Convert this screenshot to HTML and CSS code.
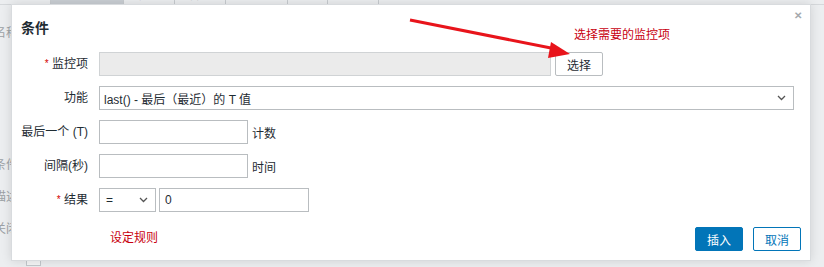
FILE: index.html
```html
<!DOCTYPE html>
<html lang="zh-CN">
<head>
    <meta charset="UTF-8">
    <title>条件</title>
    <link rel="stylesheet" href="styles.css">
</head>
<body>
    <div class="page">
        <ul class="tabs">
            <li class="tab">配置</li>
            <li class="tab active">依赖关系</li>
            <li class="tab">信息</li>
            <li class="tab">告警</li>
            <li class="tab">触发器</li>
            <li class="tab">宏</li>
            <li class="tab">标记</li>
        </ul>
        <div class="page-labels">
            <div class="page-label top">名称</div>
            <div class="page-label mid">条件</div>
            <div class="page-label">描述</div>
            <div class="page-label">关闭</div>
        </div>
        <div class="page-check"></div>
    </div>

    <div class="dialog">
        <div class="dialog-head">
            <h2>条件</h2>
            <span class="close">&#x2715;</span>
        </div>
        <div class="form">
            <label class="lbl"><span class="req">*</span> 监控项</label>
            <div class="field">
                <input class="input readonly wide-1" type="text" readonly>
                <button class="btn-plain">选择</button>
            </div>

            <label class="lbl">功能</label>
            <div class="field">
                <div class="select wide-2">
                    <span>last() - 最后（最近）的 T 值</span>
                    <svg class="chev" width="9" height="6" viewBox="0 0 9 6"><path d="M1 1l3.5 3.5L8 1" fill="none" stroke="#555" stroke-width="1.3"/></svg>
                </div>
            </div>

            <label class="lbl">最后一个 (T)</label>
            <div class="field">
                <input class="input short" type="text">
                <span class="unit">计数</span>
            </div>

            <label class="lbl">间隔(秒)</label>
            <div class="field">
                <input class="input short" type="text">
                <span class="unit">时间</span>
            </div>

            <label class="lbl"><span class="req">*</span> 结果</label>
            <div class="field tight">
                <div class="select op">
                    <span>=</span>
                    <svg class="chev" width="9" height="6" viewBox="0 0 9 6"><path d="M1 1l3.5 3.5L8 1" fill="none" stroke="#555" stroke-width="1.3"/></svg>
                </div>
                <input class="input value" type="text" value="0">
            </div>
        </div>
        <div class="dialog-foot">
            <span class="note rule-note">设定规则</span>
            <div class="actions">
                <button class="btn-primary">插入</button>
                <button class="btn-alt">取消</button>
            </div>
        </div>
    </div>

    <!-- annotation layer -->
    <span class="note pick-note">选择需要的监控项</span>
    <svg class="arrow" width="824" height="267" viewBox="0 0 824 267">
        <line x1="410" y1="20" x2="556" y2="49" stroke="#e8141b" stroke-width="3"/>
        <polygon points="570,54 551,42 548,58" fill="#e8141b"/>
    </svg>
</body>
</html>
```

FILE: styles.css
```css
body {
    margin: 0;
    width: 824px;
    height: 267px;
    overflow: hidden;
    background-color: #eceef0;
    font-family: Arial, "Liberation Sans", "Noto Sans CJK SC", sans-serif;
    font-size: 12px;
    color: #1f2c33;
    position: relative;
}

/* page behind the dialog */
.page {
    height: 267px;
}
.tabs {
    list-style: none;
    margin: -13px 0 0 0;
    padding: 0;
    display: flex;
    height: 17px;
    border-bottom: 1px solid #d5d8db;
    font-size: 11px;
    line-height: 13px;
}
.tab {
    padding: 2px 14px;
    border-right: 1px solid #c7cbcf;
    color: #9aa0a4;
    white-space: nowrap;
}
.tab.active {
    background-color: #c9ced3;
}
.page-labels {
    width: 18px;
    padding-top: 18px;
}
.page-label {
    text-align: right;
    color: #9ca1a5;
    white-space: nowrap;
    direction: rtl;
    margin-bottom: 18px;
    height: 14px;
}
.page-label.top {
    margin-bottom: 118px;
}
.page-check {
    margin: 2px 0 0 26px;
    width: 13px;
    height: 13px;
    border: 1px solid #c3c8cc;
    background-color: #f4f5f6;
}

/* dialog */
.dialog {
    position: absolute;
    left: 11px;
    top: 4px;
    width: 800px;
    height: 257px;
    box-sizing: border-box;
    background-color: #fff;
    border: 1px solid #d8dbde;
    box-shadow: 0 0 10px rgba(0, 0, 0, 0.12);
    padding: 0 9px 0 9px;
}
.dialog-head {
    display: flex;
    justify-content: space-between;
    height: 39px;
}
.dialog-head h2 {
    margin: 12px 0 0 0;
    font-size: 14px;
    font-weight: bold;
    color: #1f2c33;
}
.close {
    margin: 5px -1px 0 0;
    font-size: 10px;
    font-weight: bold;
    color: #a5a9ad;
}

.form {
    margin-top: 8px;
    display: grid;
    grid-template-columns: 67px 1fr;
    column-gap: 11px;
    row-gap: 10px;
}
.lbl {
    text-align: right;
    line-height: 24px;
    white-space: nowrap;
}
.req {
    color: #d40000;
    font-size: 10px;
    vertical-align: 1px;
}
.field {
    display: flex;
    align-items: center;
    gap: 4px;
    height: 24px;
}
.field.tight {
    gap: 3px;
}
.input {
    box-sizing: border-box;
    height: 24px;
    border: 1px solid #b9bdc0;
    padding: 0 4px;
    font-family: inherit;
    font-size: 12px;
    color: #1f2c33;
    background-color: #fff;
    margin: 0;
}
.input.readonly {
    background-color: #ebebeb;
    border-color: #d0d3d5;
}
.wide-1 {
    width: 452px;
}
.short {
    width: 149px;
}
.value {
    width: 150px;
    padding-left: 5px;
}
.select {
    box-sizing: border-box;
    height: 24px;
    border: 1px solid #b9bdc0;
    display: flex;
    align-items: center;
    justify-content: space-between;
    padding: 0 7px 0 4px;
    background-color: #fff;
}
.wide-2 {
    width: 695px;
}
.op {
    width: 57px;
    padding-left: 6px;
}
.btn-plain {
    box-sizing: border-box;
    height: 24px;
    width: 48px;
    background-color: #fff;
    border: 1px solid #b9bdc0;
    border-radius: 2px;
    font-family: inherit;
    font-size: 12px;
    color: #1f2c33;
    padding: 0;
}

.dialog-foot {
    display: flex;
    justify-content: space-between;
    align-items: center;
    margin-top: 15px;
}
.rule-note {
    margin-left: 89px;
    margin-top: -6px;
}
.actions {
    display: flex;
    gap: 10px;
}
.btn-primary, .btn-alt {
    box-sizing: border-box;
    height: 24px;
    width: 48px;
    border-radius: 2px;
    font-family: inherit;
    font-size: 12px;
    padding: 0;
}
.btn-primary {
    background-color: #0275b8;
    border: 1px solid #0275b8;
    color: #fff;
}
.btn-alt {
    background-color: #fff;
    border: 1px solid #0275b8;
    color: #0275b8;
}

/* annotations */
.note {
    color: #c8000f;
    font-size: 12px;
}
.pick-note {
    position: absolute;
    left: 574px;
    top: 25px;
}
.arrow {
    position: absolute;
    left: 0;
    top: 0;
    pointer-events: none;
}
```
